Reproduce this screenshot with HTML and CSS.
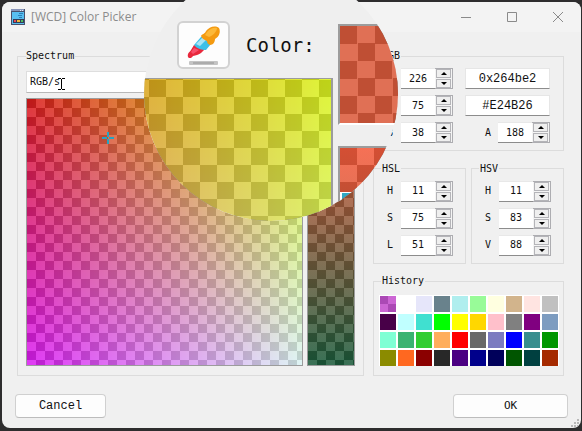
FILE: index.html
```html
<!DOCTYPE html>
<html lang="en">
<head>
<meta charset="utf-8">
<title>[WCD] Color Picker</title>
<link rel="stylesheet" href="styles.css">
</head>
<body>
<div class="window">
  <header class="titlebar">
    <svg class="app-icon" width="14" height="16" viewBox="0 0 14 16" shape-rendering="crispEdges">
      <path fill="#48506c" d="M0 0h14v16H0z"/>
      <path fill="#8794b8" d="M0 0h13v2H0z"/>
      <path fill="#e8ecf4" d="M9 1h1v1H9zM11 1h1v1h-1z"/>
      <path fill="#58bef0" d="M1 3h12v12H1z"/>
      <path fill="#2d7fb8" d="M8 4h4v1H8zM7 6h4v1H7zM8 8h3v1H8z"/>
      <path fill="#343c58" d="M2 10h11v4H2z"/>
      <path fill="#e6495a" d="M3 11h2v2H3z"/>
      <path fill="#f0b43c" d="M6 11h3v2H6z"/>
      <path fill="#4cc05c" d="M10 11h2v2h-2z"/>
    </svg>
    <h1 class="title">[WCD] Color Picker</h1>
    <div class="controls">
      <button class="control" type="button" aria-label="Minimize"><svg width="12" height="12"><path d="M1 6.500h10"/></svg></button>
      <button class="control" type="button" aria-label="Maximize"><svg width="12" height="12"><path d="M1.500 1.500h9v9h-9z"/></svg></button>
      <button class="control" type="button" aria-label="Close"><svg width="12" height="12"><path d="M1 1l10 10M11 1L1 11"/></svg></button>
    </div>
  </header>

  <main class="content">
    <fieldset class="group spectrum-group">
      <legend>Spectrum</legend>
      <div class="combo">
        <select class="mode" aria-label="Spectrum mode"><option>RGB/s</option></select>
        <svg class="ibeam" width="7" height="12" viewBox="0 0 7 12" shape-rendering="crispEdges"><path fill="#000" d="M0 0h3v1H0zM4 0h3v1H4zM3 1h1v10H3zM0 11h3v1H0zM4 11h3v1H4z"/></svg>
      </div>
      <div class="fields">
        <div class="checker field-box">
          <div class="field"></div>
          <svg class="cross" width="12" height="12" shape-rendering="crispEdges"><path fill="#23a5c4" d="M5 0h2v5H5zM5 7h2v5H5zM0 5h5v2H0zM7 5h5v2H7z"/></svg>
        </div>
        <div class="checker strip-box"><div class="strip"></div></div>
      </div>
    </fieldset>

    <div class="side">
      <fieldset class="group rgb">
        <legend>RGB</legend>
        <label for="r">R</label><div class="spin"><input id="r" value="226"><span class="steps"><button type="button" aria-label="Up"></button><button type="button" aria-label="Down"></button></span></div>
        <input class="hex" aria-label="Integer value" value="0x264be2">
        <label for="g">G</label><div class="spin"><input id="g" value="75"><span class="steps"><button type="button" aria-label="Up"></button><button type="button" aria-label="Down"></button></span></div>
        <input class="hex" aria-label="Hex value" value="#E24B26">
        <label for="b">B</label><div class="spin"><input id="b" value="38"><span class="steps"><button type="button" aria-label="Up"></button><button type="button" aria-label="Down"></button></span></div>
        <div class="alpha"><label for="a">A</label><div class="spin"><input id="a" value="188"><span class="steps"><button type="button" aria-label="Up"></button><button type="button" aria-label="Down"></button></span></div></div>
      </fieldset>

      <div class="pair">
        <fieldset class="group triple">
          <legend>HSL</legend>
          <label for="h1">H</label><div class="spin"><input id="h1" value="11"><span class="steps"><button type="button" aria-label="Up"></button><button type="button" aria-label="Down"></button></span></div>
          <label for="s1">S</label><div class="spin"><input id="s1" value="75"><span class="steps"><button type="button" aria-label="Up"></button><button type="button" aria-label="Down"></button></span></div>
          <label for="l1">L</label><div class="spin"><input id="l1" value="51"><span class="steps"><button type="button" aria-label="Up"></button><button type="button" aria-label="Down"></button></span></div>
        </fieldset>
        <fieldset class="group triple">
          <legend>HSV</legend>
          <label for="h2">H</label><div class="spin"><input id="h2" value="11"><span class="steps"><button type="button" aria-label="Up"></button><button type="button" aria-label="Down"></button></span></div>
          <label for="s2">S</label><div class="spin"><input id="s2" value="83"><span class="steps"><button type="button" aria-label="Up"></button><button type="button" aria-label="Down"></button></span></div>
          <label for="v2">V</label><div class="spin"><input id="v2" value="88"><span class="steps"><button type="button" aria-label="Up"></button><button type="button" aria-label="Down"></button></span></div>
        </fieldset>
      </div>

      <fieldset class="group history">
        <legend>History</legend>
        <div class="swatches" id="swatches"></div>
      </fieldset>
    </div>
  </main>

  <footer class="actions">
    <button class="action cancel" type="button">Cancel</button>
    <button class="action ok" type="button">OK</button>
  </footer>
  <svg class="grip" width="8" height="8" shape-rendering="crispEdges"><path fill="#b8b8b8" d="M6 0h2v2H6zM3 3h2v2H3zM6 3h2v2H6zM0 6h2v2H0zM3 6h2v2H3zM6 6h2v2H6z"/></svg>
</div>

<div class="lens">
  <div class="lens-main">
    <div class="lens-bar">
      <button class="pick" type="button" aria-label="Pick color">
        <svg width="36" height="42" viewBox="0 0 36 42">
          <rect x="3" y="37" width="29" height="4" rx="1" fill="#c4c4c4"/>
          <path fill="#acacac" d="M7 38h21v2H7z"/>
          <path fill="#e8283c" d="M2 33c-1-4 2-5 3-7l3-5 12 3-5 5c-3 2-5 2-8 3-1 2-4 3-5 1z"/>
          <path fill="#f8506c" d="M5 28l3-4 5 2-6 4z"/>
          <path fill="#3cc0e8" d="M8 21l7-8 4-1 6 8-5 6c-4 0-9-1-12-5z"/>
          <path fill="#a8e4f6" d="M10 20l7-7 4 2-7 7z"/>
          <path fill="#f49a10" d="M15 12c1-2 4-2 5-5 3-4 9-6 13-3 2 4 0 9-4 11 0 3-2 6-5 6-2-1-3-2-3-4-2-1-5-2-6-5z"/>
          <path fill="#fcb838" d="M19 11c3-5 7-8 12-7 0 4-5 8-8 9z"/>
        </svg>
      </button>
      <span class="lens-label">Color:</span>
    </div>
    <div class="checker lens-field-box"><div class="field"></div></div>
  </div>
  <div class="lens-side">
    <div class="checker lens-swatch"><div class="current"></div></div>
    <div class="checker lens-strip"><div class="strip"></div><div class="handle"></div></div>
  </div>
</div>
<script src="script.js"></script>
</body>
</html>
```
FILE: styles.css
```css
* { box-sizing: border-box; }

body {
  margin: 0;
  min-height: 100vh;
  padding: 2px 1px 3px 2px;
  display: flex;
  overflow: hidden;
  position: relative;
  background: #2e2d2e;
  font: 10px/14px "DejaVu Sans Mono", monospace;
  color: #111;
}

button, input, select { font: inherit; color: inherit; margin: 0; padding: 0; }

.window {
  flex: 1;
  display: flex;
  flex-direction: column;
  position: relative;
  background: #f0f0f0;
  border-radius: 8px;
  overflow: hidden;
}

.titlebar {
  height: 30px;
  display: flex;
  align-items: center;
  padding: 0 0 0 9px;
  background: #f3f3f3;
}

.title {
  margin: 0 auto 0 6px;
  font: 12px/16px "Open Sans", "Noto Sans", sans-serif;
  color: #8c8c8c;
}

.controls { display: flex; }
.control { width: 46px; height: 28px; border: 0; background: none; display: grid; place-items: center; }
.control svg { fill: none; stroke: #8a8a8a; stroke-width: 1; }

.content {
  flex: 1;
  display: grid;
  grid-template-columns: 1fr 191px;
  gap: 9px;
  padding: 17px 17px 0 15px;
}

.group { min-width: 0; margin: 0; border: 1px solid #dcdcdc; }
.group legend { height: 14px; padding: 0 1px; }

.spectrum-group { display: flex; flex-direction: column; gap: 5px; padding: 8px 8px 9px; }
.spectrum-group legend { padding-left: 0; }

.combo { position: relative; display: flex; }
.mode {
  appearance: none;
  width: 100%;
  height: 22px;
  padding: 0 3px;
  border: 1px solid #dedede;
  border-bottom-color: #b8b8b8;
  border-radius: 0;
  background: #fff;
}
.ibeam { position: absolute; left: 32px; top: 7px; }

.fields { flex: 1; display: flex; gap: 4px; }

.checker { background: conic-gradient(#dadada 25%, #5b5b5b 0 50%, #dadada 0 75%, #5b5b5b 0) 0 0 / 18px 18px; }
.field {
  height: 100%;
  opacity: 0.737;
  background-image: linear-gradient(to bottom, #000, #00f), linear-gradient(to right, #e20000, #e2ff00);
  background-blend-mode: screen;
}
.strip { height: 100%; opacity: 0.737; background: linear-gradient(#ff4b26, #004b26); }
.field-box { flex: 1; position: relative; border: 1px solid #9c9c9c; }
.strip-box { width: 48px; border: 1px solid #9c9c9c; }
.cross { position: absolute; left: 75px; top: 33px; }

.side { display: flex; flex-direction: column; justify-content: space-between; }

.rgb, .triple {
  display: grid;
  grid-template-columns: 8px 52px;
  column-gap: 6px;
  row-gap: 6px;
  align-items: center;
  padding: 5px 13px 7px;
}
.rgb { grid-template-columns: 8px 52px 1fr; }
.rgb legend, .triple legend { margin-left: -6px; }
.hex { margin-left: 6px; }
.alpha { display: flex; align-items: center; justify-content: flex-end; gap: 7px; }

.pair { display: grid; grid-template-columns: 1fr 1fr; gap: 5px; }
.triple { padding-right: 0; }

.spin {
  width: 52px;
  height: 21px;
  display: flex;
  background: #fff;
}
.spin input {
  flex: 1;
  min-width: 0;
  border: solid #e8e8e8;
  border-width: 1px 0;
  border-bottom-color: #8c8c8c;
  background: none;
  text-align: center;
}
.steps {
  width: 18px;
  display: grid;
  grid-template-rows: 1fr 1fr;
  gap: 1px;
  padding: 0 1px;
  border: solid #adadb1;
  border-width: 1px 1px 1px 0;
  background: #f4f4f4;
}
.steps button { border: 1px solid #b4b4b8; background: #efefef; display: grid; place-items: center; }
.steps button::before { content: ""; border: 3px solid transparent; border-top: 0; border-bottom-color: #000; }
.steps button:last-child::before { border-bottom: 0; border-top: 3px solid #000; }

.hex {
  width: auto;
  min-width: 0;
  height: 21px;
  border: 1px solid #e6e6e6;
  border-bottom-color: #8c8c8c;
  background: #fff;
  text-align: center;
  font: 12px/14px "Liberation Mono", monospace;
}

.history { height: 102px; padding: 7px 3px 0 5px; }
.history legend { margin-left: 2px; }
.swatches {
  display: grid;
  grid-template-columns: repeat(10, 16px);
  grid-auto-rows: 16px;
  gap: 2px;
  width: max-content;
  padding: 1px 1px 0;
  background: #fff;
}
.swatch { border: 0; }
.swatch.translucent { background: conic-gradient(#cc66d4 25%, #ab49b5 0 50%, #cc66d4 0 75%, #ab49b5 0); background: conic-gradient(#cc66d4 25%, #ab49b5 0 50%, #cc66d4 0 75%, #ab49b5 0); }

.actions { display: flex; justify-content: space-between; padding: 18px 13px 10px; }
.action { height: 24px; border: 1px solid #d0d0d0; border-bottom-color: #bcbcbc; border-radius: 4px; background: #fdfdfd; }
.cancel { width: 91px; font: 12px/14px "Liberation Mono", monospace; }
.ok { width: 115px; font-size: 11px; }
.grip { position: absolute; right: 2px; bottom: 1px; }

/* Magnifier floating over the dialog */
.lens {
  position: absolute;
  left: 144px;
  top: -33px;
  width: 254px;
  height: 254px;
  display: flex;
  gap: 5px;
  overflow: hidden;
  clip-path: circle(127px);
  background: #efefef;
}
.lens-main { width: 189px; display: flex; flex-direction: column; padding-top: 54px; }
.lens-bar { display: flex; align-items: center; gap: 16px; padding-left: 33px; margin-bottom: 9px; }
.pick {
  width: 53px;
  height: 48px;
  display: grid;
  place-items: center;
  border: 2px solid #d2d2d2;
  border-radius: 6px;
  background: #fdfdfd;
}
.lens-label { font-size: 19px; line-height: 24px; }
.lens-field-box {
  flex: 1;
  border: solid #9c9c9c;
  border-width: 1px 2px 0 0;
  background-size: 34px 34px;
  background-position: 5px 1px;
}
.lens-field-box .field { background-size: 522px 505px; background-position: right top; }
.lens-side { flex: 1; display: flex; flex-direction: column; gap: 21px; padding-top: 57px; }
.lens-swatch, .lens-strip { border: solid #9c9c9c; border-width: 2px 0 0 2px; background-size: 35px 35px; }
.lens-swatch { height: 101px; border-bottom: 2px solid #fff; }
.current { height: 100%; opacity: 0.737; background: #e24b26; }
.lens-strip { position: relative; flex: 1; background-size: 34px 34px; }
.lens-strip .strip { background-size: 100% 505px; }
.handle { position: absolute; left: 0; top: 44px; width: 60px; height: 20px; border: 2px solid #fff; border-top-width: 1px; background: #2fa8c4; }
```
FILE: script.js
```js
const history = [
  "", "#ffffff", "#e6e6fa", "#69828c", "#afeeee", "#98fb98", "#ffffe0", "#d2b48c", "#ffe4e1", "#c0c0c0",
  "#480048", "#c0ffff", "#40e0d0", "#00ff00", "#ffff00", "#ffd700", "#ffc0cb", "#808080", "#800080", "#7d9cc0",
  "#7fffd4", "#3cb371", "#32cd32", "#ffad5c", "#ff0000", "#696969", "#7b7bc0", "#0000ff", "#388e8e", "#009600",
  "#8b8b00", "#ff6820", "#8b0000", "#282828", "#4b0082", "#00008b", "#00005a", "#005500", "#004040", "#a52a00"
];

const grid = document.getElementById("swatches");
for (const color of history) {
  const swatch = document.createElement("button");
  swatch.type = "button";
  swatch.className = color ? "swatch" : "swatch translucent";
  swatch.setAttribute("aria-label", color || "translucent violet");
  if (color) swatch.style.background = color;
  grid.append(swatch);
}
```
